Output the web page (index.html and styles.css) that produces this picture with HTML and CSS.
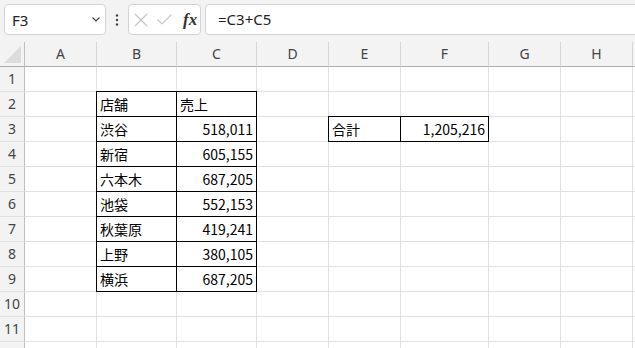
FILE: index.html
```html
<!DOCTYPE html>
<html lang="ja">
<head>
  <meta charset="UTF-8" />
  <meta name="viewport" content="width=device-width, initial-scale=1" />
  <title>Book1 - Excel</title>
  <link rel="stylesheet" href="styles.css">
</head>
<body>

  <!-- 名前ボックスと数式バー -->
  <div class="toolbar">
    <div class="namebox">
      <span>F3</span>
      <svg class="chev" width="8" height="5" viewBox="0 0 8 5"><polyline points="0.5,0.5 4,4 7.5,0.5" fill="none" stroke="#444" stroke-width="1.2"/></svg>
    </div>
    <div class="more">
      <svg width="4" height="12" viewBox="0 0 4 12"><circle cx="2" cy="1.5" r="1.2" fill="#444"/><circle cx="2" cy="6" r="1.2" fill="#444"/><circle cx="2" cy="10.5" r="1.2" fill="#444"/></svg>
    </div>
    <div class="fbtns">
      <svg width="14" height="14" viewBox="0 0 14 14"><path d="M1 1 L13 13 M13 1 L1 13" stroke="#c6c6c6" stroke-width="1.2" fill="none"/></svg>
      <svg width="15" height="11" viewBox="0 0 15 11"><polyline points="0.5,5.5 5,10 14.5,0.5" stroke="#c6c6c6" stroke-width="1.2" fill="none"/></svg>
      <span class="fx">fx</span>
    </div>
    <div class="formula">=C3+C5</div>
  </div>

  <!-- シート -->
  <div class="sheet">
    <div class="ch corner"><svg width="24" height="24" viewBox="0 0 24 24"><polygon points="21,4 21,21 4,21" fill="#dcdcdc"/></svg></div>
    <div class="ch">A</div><div class="ch">B</div><div class="ch">C</div><div class="ch">D</div><div class="ch">E</div><div class="ch">F</div><div class="ch">G</div><div class="ch">H</div><div class="ch"></div>

    <div class="rh">1</div><div class="c"></div><div class="c"></div><div class="c"></div><div class="c"></div><div class="c"></div><div class="c"></div><div class="c"></div><div class="c"></div><div class="c"></div>

    <div class="rh">2</div><div class="c"></div><div class="c bx bx-lt">店舗</div><div class="c bx bx-t">売上</div><div class="c"></div><div class="c"></div><div class="c"></div><div class="c"></div><div class="c"></div><div class="c"></div>

    <div class="rh">3</div><div class="c"></div><div class="c bx bx-l">渋谷</div><div class="c bx num">518,011</div><div class="c"></div><div class="c bx bx-lt">合計</div><div class="c bx bx-t num">1,205,216</div><div class="c"></div><div class="c"></div><div class="c"></div>

    <div class="rh">4</div><div class="c"></div><div class="c bx bx-l">新宿</div><div class="c bx num">605,155</div><div class="c"></div><div class="c"></div><div class="c"></div><div class="c"></div><div class="c"></div><div class="c"></div>

    <div class="rh">5</div><div class="c"></div><div class="c bx bx-l">六本木</div><div class="c bx num">687,205</div><div class="c"></div><div class="c"></div><div class="c"></div><div class="c"></div><div class="c"></div><div class="c"></div>

    <div class="rh">6</div><div class="c"></div><div class="c bx bx-l">池袋</div><div class="c bx num">552,153</div><div class="c"></div><div class="c"></div><div class="c"></div><div class="c"></div><div class="c"></div><div class="c"></div>

    <div class="rh">7</div><div class="c"></div><div class="c bx bx-l">秋葉原</div><div class="c bx num">419,241</div><div class="c"></div><div class="c"></div><div class="c"></div><div class="c"></div><div class="c"></div><div class="c"></div>

    <div class="rh">8</div><div class="c"></div><div class="c bx bx-l">上野</div><div class="c bx num">380,105</div><div class="c"></div><div class="c"></div><div class="c"></div><div class="c"></div><div class="c"></div><div class="c"></div>

    <div class="rh">9</div><div class="c"></div><div class="c bx bx-l">横浜</div><div class="c bx num">687,205</div><div class="c"></div><div class="c"></div><div class="c"></div><div class="c"></div><div class="c"></div><div class="c"></div>

    <div class="rh">10</div><div class="c"></div><div class="c"></div><div class="c"></div><div class="c"></div><div class="c"></div><div class="c"></div><div class="c"></div><div class="c"></div><div class="c"></div>

    <div class="rh">11</div><div class="c"></div><div class="c"></div><div class="c"></div><div class="c"></div><div class="c"></div><div class="c"></div><div class="c"></div><div class="c"></div><div class="c"></div>

    <div class="rh"></div><div class="c"></div><div class="c"></div><div class="c"></div><div class="c"></div><div class="c"></div><div class="c"></div><div class="c"></div><div class="c"></div><div class="c"></div>
  </div>

</body>
</html>
```

FILE: styles.css
```css
* {
  box-sizing: border-box;
}
body {
  margin: 0;
  background: #fff;
  color: #000;
  font-family: "Noto Sans", "Noto Sans CJK JP", sans-serif;
  overflow: hidden;
}

/* 名前ボックスと数式バー */
.toolbar {
  display: flex;
  align-items: flex-start;
  height: 42px;
  padding: 4px 0 0 4px;
  background: #f3f3f3;
  overflow: hidden;
}
.namebox {
  width: 102px;
  height: 31px;
  flex: none;
  display: flex;
  align-items: center;
  justify-content: space-between;
  padding: 0 5px 0 7px;
  background: #fff;
  border: 1px solid #d4d4d4;
  border-radius: 4px;
  font-size: 15px;
  color: #222;
}
.more {
  width: 22px;
  height: 31px;
  flex: none;
  display: flex;
  align-items: center;
  justify-content: center;
}
.fbtns {
  width: 73px;
  height: 31px;
  flex: none;
  display: flex;
  align-items: center;
  gap: 9px;
  padding-left: 5px;
  background: #fff;
  border: 1px solid #d4d4d4;
  border-radius: 4px;
}
.fx {
  font-family: "Liberation Serif", serif;
  font-style: italic;
  font-weight: bold;
  font-size: 17px;
  color: #333;
  margin-left: 2px;
}
.formula {
  flex: 1;
  height: 31px;
  margin-left: 4px;
  margin-right: -10px;
  padding-left: 12px;
  line-height: 29px;
  background: #fff;
  border: 1px solid #d4d4d4;
  border-radius: 4px;
  font-size: 15px;
  color: #222;
}

/* シートのグリッド */
.sheet {
  display: grid;
  grid-template-columns: 25px 72px 80px 80px 72px 72px 88px 72px 72px 1fr;
  grid-auto-rows: 25px;
}
.ch {
  background: #f3f3f3;
  border-right: 1px solid #d6d6d6;
  border-bottom: 1px solid #ababab;
  text-align: center;
  line-height: 24px;
  font-size: 14px;
  color: #444;
}
.corner {
  border-right-color: #bfbfbf;
}
.corner svg {
  display: block;
}
.rh {
  background: #f3f3f3;
  border-right: 1px solid #bfbfbf;
  border-bottom: 1px solid #e1e1e1;
  text-align: center;
  line-height: 24px;
  font-size: 14px;
  color: #444;
}
.c {
  border-right: 1px solid #e1e1e1;
  border-bottom: 1px solid #e1e1e1;
  padding: 0 3px;
  line-height: 24px;
  font-family: "Noto Sans CJK JP", sans-serif;
  font-size: 14px;
  white-space: nowrap;
}
.num {
  text-align: right;
}

/* 罫線 */
.bx {
  border-right-color: #000;
  border-bottom-color: #000;
}
.bx-l {
  box-shadow: -1px 0 0 #000;
}
.bx-t {
  box-shadow: 0 -1px 0 #000;
}
.bx-lt {
  box-shadow: -1px 0 0 #000, 0 -1px 0 #000, -1px -1px 0 #000;
}
```
